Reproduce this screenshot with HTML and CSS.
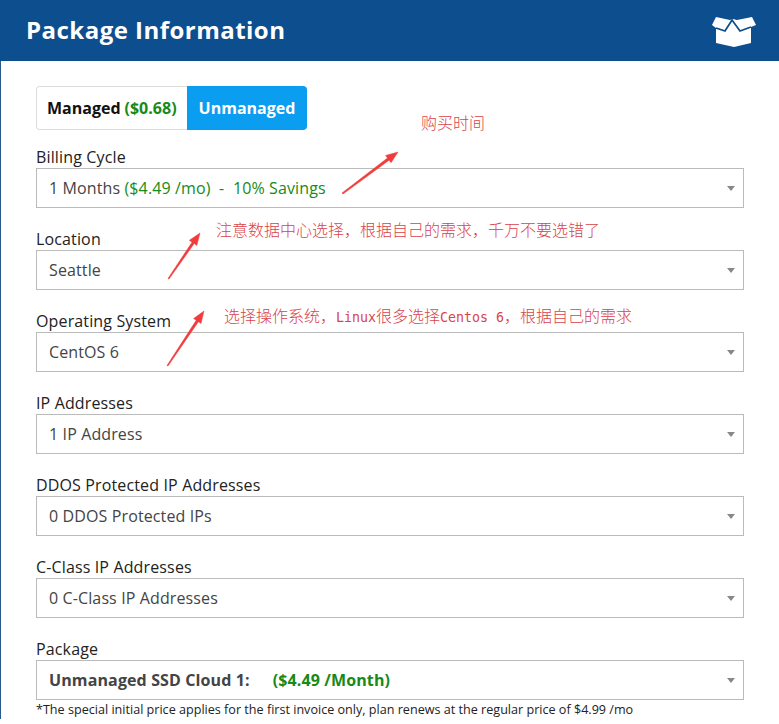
FILE: index.html
```html
<!DOCTYPE html>
<html lang="en">
<head>
<meta charset="utf-8">
<title>Package Information</title>
<link rel="stylesheet" href="styles.css">
</head>
<body>
<div class="panel">
  <header class="head">
    <h1 class="title">Package Information</h1>
    <svg class="box-icon" width="44" height="32" viewBox="0 0 44 32">
      <path fill="#fff" d="M4 1 L18 4 L21 3 L25 4 L40 1 L44 9 L39 11 L39 27 L22 31 L4 27 L4 12 L0 9 Z"/>
      <path fill="none" stroke="#0d4e8e" stroke-width="1.8" d="M4 12 L13 15 L20 4 L28 15 L39 11"/>
    </svg>
  </header>
  <main class="body">
    <div class="toggle">
      <div class="opt"><b>Managed</b> <span class="green">($0.68)</span></div>
      <div class="opt active">Unmanaged</div>
    </div>
    <div class="field">
      <div class="lab">Billing Cycle</div>
      <div class="sel"><span>1 Months <span class="green">($4.49 /mo) &nbsp;-&nbsp; 10% Savings</span></span><i class="caret"></i></div>
    </div>
    <div class="field">
      <div class="lab">Location</div>
      <div class="sel"><span>Seattle</span><i class="caret"></i></div>
    </div>
    <div class="field">
      <div class="lab">Operating System</div>
      <div class="sel"><span>CentOS 6</span><i class="caret"></i></div>
    </div>
    <div class="field">
      <div class="lab">IP Addresses</div>
      <div class="sel"><span>1 IP Address</span><i class="caret"></i></div>
    </div>
    <div class="field">
      <div class="lab">DDOS Protected IP Addresses</div>
      <div class="sel"><span>0 DDOS Protected IPs</span><i class="caret"></i></div>
    </div>
    <div class="field">
      <div class="lab">C-Class IP Addresses</div>
      <div class="sel"><span>0 C-Class IP Addresses</span><i class="caret"></i></div>
    </div>
    <div class="field last">
      <div class="lab">Package</div>
      <div class="sel strong"><span>Unmanaged SSD Cloud 1:<span class="green pkg">($4.49 /Month)</span></span><i class="caret"></i></div>
    </div>
    <p class="note">*The special initial price applies for the first invoice only, plan renews at the regular price of $4.99 /mo</p>
  </main>
</div>

<div class="note-a n1">购买时间</div>
<div class="note-a n2">注意数据中心选择，根据自己的需求，千万不要选错了</div>
<div class="note-a n3">选择操作系统，<span class="mono">Linux</span>很多选择<span class="mono">Centos 6</span>，根据自己的需求</div>

<svg class="arrows" width="779" height="724" viewBox="0 0 779 724">
  <g fill="#f03c3c" stroke="#f03c3c" stroke-width="0.5" stroke-linejoin="round">
    <path d="M342 193 L387.5 158 L385.6 155.5 L398 152 L391 162.7 L389.1 160.2 L343 194 Z"/>
    <path d="M168 278.5 L192 242.2 L189.4 240.3 L200 233 L196.8 245.5 L194.2 243.6 L169 279 Z"/>
    <path d="M167 365.5 L196.2 320.3 L193.6 318.5 L204 311 L201 323.5 L198.4 321.7 L168 366 Z"/>
  </g>
</svg>
</body>
</html>
```

FILE: styles.css
```css
* { box-sizing: border-box; }
html, body { margin: 0; padding: 0; background: #fff; }
body {
  width: 779px;
  height: 724px;
  overflow: hidden;
  position: relative;
  font-family: "Open Sans", "Noto Sans", sans-serif;
  color: #333;
}
.panel { width: 779px; border-left: 1px solid #2a5a8c; }
.head {
  height: 61px;
  margin-left: -1px;
  background: #0d4e8e;
  display: flex;
  align-items: center;
  justify-content: space-between;
  padding: 0 23px 0 26px;
}
.title {
  margin: 0 0 2px 0;
  color: #fff;
  font-size: 24px;
  font-weight: 700;
  letter-spacing: 0.47px;
  line-height: 59px;
}
.box-icon { display: block; margin-top: 3px; }
.body { padding: 25px 35px 0 35px; }
.toggle {
  display: flex;
  width: 271px;
  height: 44px;
  font-size: 16px;
  margin-bottom: 16px;
}
.opt {
  display: flex;
  align-items: center;
  gap: 4px;
  padding: 0 10px;
  border: 1px solid #ddd;
  border-right: 0;
  border-radius: 4px 0 0 4px;
  width: 151px;
  white-space: nowrap;
  font-weight: 700;
  color: #111;
}
.opt b { font-weight: 700; }
.opt.active {
  width: 120px;
  justify-content: center;
  background: #0a9df0;
  border: 0;
  border-radius: 0 4px 4px 0;
  color: #fff;
}
.green { color: #178a17; }
.field { margin-bottom: 20px; }
.field.last { margin-bottom: 0; }
.lab {
  font-size: 16px;
  line-height: 22px;
  letter-spacing: 0.14px;
  color: #222;
}
.sel {
  height: 40px;
  width: 708px;
  border: 1px solid #bbb;
  padding: 0 8px 0 12px;
  display: flex;
  align-items: center;
  justify-content: space-between;
  font-size: 16px;
  letter-spacing: 0.12px;
  color: #444;
  white-space: pre;
}
.sel.strong { font-weight: 700; }
.pkg { margin-left: 23px; }
.caret {
  display: block;
  width: 0;
  height: 0;
  border-left: 4px solid transparent;
  border-right: 4px solid transparent;
  border-top: 5px solid #888;
}
.note {
  margin: 1px 0 0 0;
  font-size: 12.6px;
  line-height: 18px;
  color: #222;
  white-space: nowrap;
}
.note-a {
  position: absolute;
  color: #d9434a;
  font-family: "Noto Sans CJK SC", sans-serif;
  font-weight: 300;
  font-size: 16px;
  line-height: 20px;
  white-space: nowrap;
}
.n1 { left: 421px; top: 112px; }
.n2 { left: 216px; top: 219px; }
.n3 { left: 224px; top: 305px; }
.mono { font-family: "DejaVu Sans Mono", monospace; font-size: 13.3px; }
.arrows { position: absolute; left: 0; top: 0; pointer-events: none; }
```
